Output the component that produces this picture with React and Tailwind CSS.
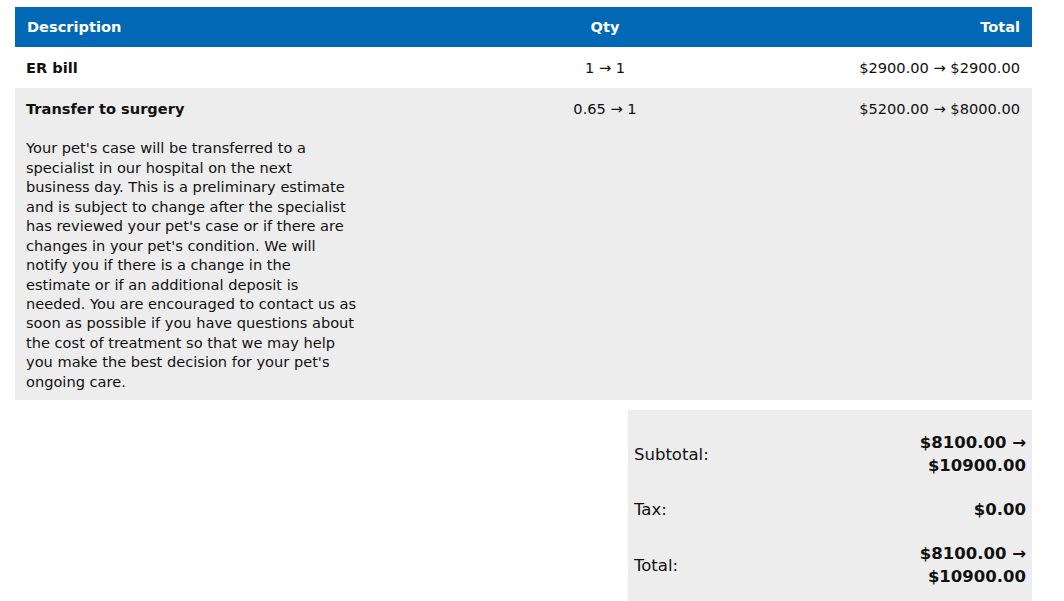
const noteLines = [
  "Your pet's case will be transferred to a",
  "specialist in our hospital on the next",
  "business day. This is a preliminary estimate",
  "and is subject to change after the specialist",
  "has reviewed your pet's case or if there are",
  "changes in your pet's condition. We will",
  "notify you if there is a change in the",
  "estimate or if an additional deposit is",
  "needed. You are encouraged to contact us as",
  "soon as possible if you have questions about",
  "the cost of treatment so that we may help",
  "you make the best decision for your pet's",
  "ongoing care.",
];

const items = [
  { name: "ER bill", qty: "1 → 1", total: "$2900.00 → $2900.00" },
  { name: "Transfer to surgery", qty: "0.65 → 1", total: "$5200.00 → $8000.00", note: noteLines },
];

const App = () => {
  return (
    <div className="min-h-[601px] bg-white pt-[7px] pl-[15px] pr-[32px] text-[#111] font-['DejaVu_Sans',sans-serif]">
      {/* Items table */}
      <div className="text-[14.6px] leading-[19.45px]">
        <div className="grid grid-cols-[508px_164px_1fr] bg-[#0068b5] text-white font-bold h-[40px] items-center">
          <div className="px-3">Description</div>
          <div className="text-center">Qty</div>
          <div className="px-3 text-right">Total</div>
        </div>
        {items.map((item, i) => (
          <div
            key={item.name}
            className={`grid grid-cols-[508px_164px_1fr] pt-[11px] ${item.note ? "pb-[9px]" : "pb-[10.5px]"} ${i % 2 ? "bg-[#ededed]" : "bg-white"}`}
          >
            <div className="px-[11px]">
              <div className="font-bold">{item.name}</div>
              {item.note && (
                <p className="mt-[20px] whitespace-nowrap">
                  {item.note.map((line) => (
                    <span key={line} className="block">{line}</span>
                  ))}
                </p>
              )}
            </div>
            <div className="text-center">{item.qty}</div>
            <div className="px-3 text-right">{item.total}</div>
          </div>
        ))}
      </div>

      {/* Summary */}
      <div className="flex justify-end mt-[10px]">
        <div className="w-[404px] bg-[#ededed] px-[6px] pt-[10.5px] pb-[10px] text-[16.5px] leading-[23px]">
          <div className="flex items-center justify-between py-[10.5px]">
            <span>Subtotal:</span>
            <span className="font-bold text-right">
              $8100.00 →<br />$10900.00
            </span>
          </div>
          <div className="flex items-center justify-between py-[10.5px]">
            <span>Tax:</span>
            <span className="font-bold">$0.00</span>
          </div>
          <div className="flex items-center justify-between py-[10.5px]">
            <span>Total:</span>
            <span className="font-bold text-right">
              $8100.00 →<br />$10900.00
            </span>
          </div>
        </div>
      </div>
    </div>
  );
};

export default App;
